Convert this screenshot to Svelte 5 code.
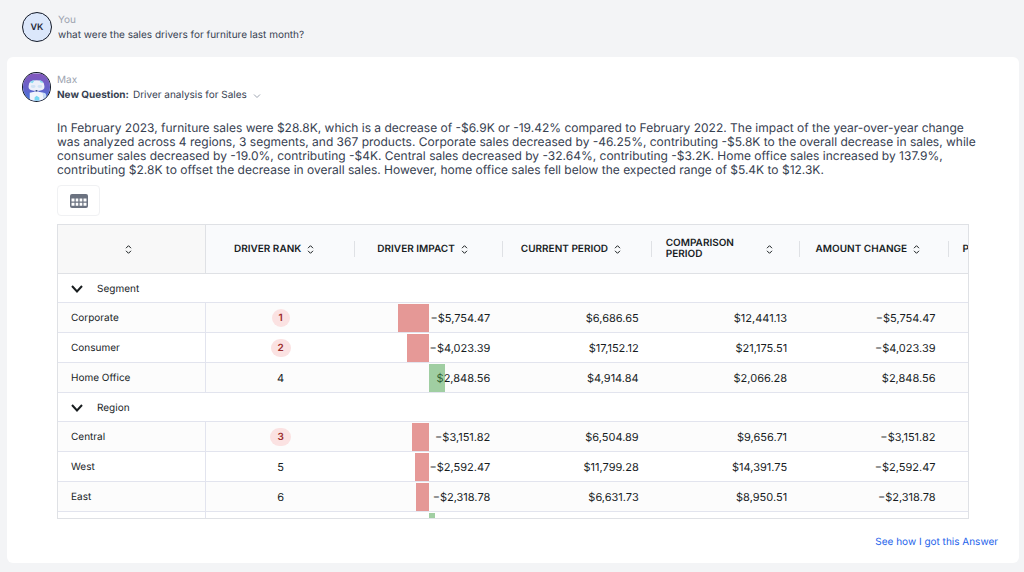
<script lang="ts">
  interface Driver {
    name: string;
    rank: number;
    impact: number;
    current: number;
    comparison: number;
  }

  interface Group {
    name: string;
    drivers: Driver[];
  }

  const columns = [
    '',
    'Driver rank',
    'Driver impact',
    'Current period',
    'Comparison period',
    'Amount change',
    'Percent',
  ];

  const groups: Group[] = [
    {
      name: 'Segment',
      drivers: [
        { name: 'Corporate', rank: 1, impact: -5754.47, current: 6686.65, comparison: 12441.13 },
        { name: 'Consumer', rank: 2, impact: -4023.39, current: 17152.12, comparison: 21175.51 },
        { name: 'Home Office', rank: 4, impact: 2848.56, current: 4914.84, comparison: 2066.28 },
      ],
    },
    {
      name: 'Region',
      drivers: [
        { name: 'Central', rank: 3, impact: -3151.82, current: 6504.89, comparison: 9656.71 },
        { name: 'West', rank: 5, impact: -2592.47, current: 11799.28, comparison: 14391.75 },
        { name: 'East', rank: 6, impact: -2318.78, current: 6631.73, comparison: 8950.51 },
        { name: 'South', rank: 7, impact: 1127.4, current: 3848.2, comparison: 2720.8 },
      ],
    },
  ];

  let open = $state<Record<string, boolean>>({ Segment: true, Region: true });

  function money(value: number) {
    const text = Math.abs(value).toLocaleString('en-US', {
      minimumFractionDigits: 2,
      maximumFractionDigits: 2,
    });
    return `${value < 0 ? '−' : ''}$${text}`;
  }

  // bar width in percent of the cell
  function barWidth(value: number) {
    return (Math.abs(value) / 27100) * 100;
  }
</script>

<main class="chat">
  <section class="message question">
    <div class="avatar">VK</div>
    <div class="message-body">
      <div class="author">You</div>
      <div class="line">what were the sales drivers for furniture last month?</div>
    </div>
  </section>

  <section class="card">
    <div class="message">
      <div class="avatar avatar-bot">
        <svg viewBox="0 0 28 28" aria-hidden="true">
          <defs>
            <linearGradient id="sky" x1="0" y1="0" x2="0" y2="1">
              <stop offset="0" stop-color="#8457bd" />
              <stop offset="0.6" stop-color="#6264cb" />
              <stop offset="1" stop-color="#3f73dc" />
            </linearGradient>
          </defs>
          <rect width="28" height="28" fill="url(#sky)" />
          <path d="M6 12q0-5 8-5t8 5q1 4-2 5-6 2-12 0-3-1-2-5z" fill="#edf0fa" />
          <path d="M7 9q2-2 5-2l-2 3zM17 7q3 0 4 3l-3-1z" fill="#8bdcf2" />
          <ellipse cx="10.500" cy="13.500" rx="2.500" ry="1.500" fill="#d0e2f5" />
          <ellipse cx="17.500" cy="13.500" rx="2.500" ry="1.500" fill="#d0e2f5" />
          <path d="M11 17h6l-1 2h-4z" fill="#cbd2ee" />
          <circle cx="14" cy="18" r="1" fill="#283c70" />
          <path d="M7 20q7-2 14 0l1 8H7z" fill="#f2f5fc" />
          <path d="M20 20q5-1 4 5l-2 2z" fill="#c8dcf5" />
          <path d="M12 25l2-2 3 2v3h-5z" fill="#79d9f2" />
        </svg>
      </div>
      <div class="message-body">
        <div class="author">Max</div>
        <div class="line">
          <strong>New Question:</strong> Driver analysis for Sales
          <button class="icon-button" aria-label="Show details">
            <svg width="8" height="6" viewBox="0 0 8 6"><path d="M1 1.500l3 3 3-3" /></svg>
          </button>
        </div>
      </div>
    </div>

    <div class="answer">
      <p class="summary">
        In February 2023, furniture sales were $28.8K, which is a decrease of -$6.9K or -19.42%
        compared to February 2022. The impact of the year-over-year change was analyzed across 4
        regions, 3 segments, and 367 products. Corporate sales decreased by -46.25%, contributing
        -$5.8K to the overall decrease in sales, while consumer sales decreased by -19.0%,
        contributing -$4K. Central sales decreased by -32.64%, contributing -$3.2K. Home office
        sales increased by 137.9%, contributing $2.8K to offset the decrease in overall sales.
        However, home office sales fell below the expected range of $5.4K to $12.3K.
      </p>

      <button class="view-button" aria-label="Table view">
        <svg width="18" height="14" viewBox="0 0 18 14">
          <rect width="18" height="14" rx="2" fill="#6b7280" />
          <g fill="#fff">
            <path d="M1.500 4.500h3v3h-3zM5.700 4.500h2.600v3H5.700zM9.600 4.500h2.700v3H9.600zM13.500 4.500h3v3h-3z" />
            <path d="M1.500 8.800h3v3h-3zM5.700 8.800h2.600v3H5.700zM9.600 8.800h2.700v3H9.600zM13.500 8.800h3v3h-3z" />
          </g>
        </svg>
      </button>

      <div class="grid">
        <table>
          <thead>
            <tr>
              {#each columns as column}
                <th scope="col">
                  <button class="sort" aria-label={`Sort by ${column || 'name'}`}>
                    <span>{column}</span>
                    <svg width="7" height="9" viewBox="0 0 7 9">
                      <path d="M1 3.200l2.500-2.500 2.500 2.500M1 5.800l2.500 2.500 2.500-2.500" />
                    </svg>
                  </button>
                </th>
              {/each}
            </tr>
          </thead>
          <tbody>
            {#each groups as group}
              <tr class="group">
                <td colspan={columns.length}>
                  <button class="toggle" onclick={() => (open[group.name] = !open[group.name])}>
                    <svg width="12" height="8" viewBox="0 0 12 8"><path d="M1 1l5 5.500 5-5.500" /></svg>
                    {group.name}
                  </button>
                </td>
              </tr>
              {#if open[group.name]}
                {#each group.drivers as driver, i}
                  <tr class:striped={i % 2 === 0}>
                    <th scope="row">{driver.name}</th>
                    <td class="rank">
                      <span class:top={driver.rank <= 3}>{driver.rank}</span>
                    </td>
                    <td>
                      {money(driver.impact)}
                      <span
                        class="bar"
                        class:negative={driver.impact < 0}
                        style:width="{barWidth(driver.impact)}%"
                      ></span>
                    </td>
                    <td>{money(driver.current)}</td>
                    <td>{money(driver.comparison)}</td>
                    <td>{money(driver.impact)}</td>
                    <td></td>
                  </tr>
                {/each}
              {/if}
            {/each}
          </tbody>
        </table>
      </div>
    </div>

    <div class="footer">
      <a href="#answer">See how I got this Answer</a>
    </div>
  </section>
</main>

<style>
  :global(body) {
    background: #f3f4f6;
    font-family: Inter, 'Liberation Sans', sans-serif;
    color: #374151;
    text-rendering: geometricPrecision;
  }
  button {
    border: 0;
    padding: 0;
    background: none;
    font: inherit;
    color: inherit;
    cursor: pointer;
    text-rendering: inherit;
  }
  svg {
    display: block;
    fill: none;
  }
  .chat {
    padding: 12px 5px 9px 7px;
  }
  .message {
    display: flex;
    gap: 6px;
    padding-left: 15px;
  }
  .message-body {
    padding-top: 1px;
  }
  .question {
    margin-bottom: 14px;
  }
  .avatar {
    display: flex;
    align-items: center;
    justify-content: center;
    box-sizing: border-box;
    width: 30px;
    height: 30px;
    border: 1px solid #111827;
    border-radius: 50%;
    background: #dbe7fb;
    color: #1f2937;
    font-size: 9px;
    font-weight: 600;
    overflow: hidden;
  }
  .avatar-bot {
    width: 29px;
  }
  .avatar-bot svg {
    width: 100%;
    height: 100%;
  }
  .author,
  .line {
    font-size: 10px;
    line-height: 15px;
  }
  .author {
    color: #9ca3af;
  }
  .line {
    display: flex;
    gap: 4px;
    align-items: center;
  }
  .line strong {
    font-weight: 700;
  }
  .icon-button {
    margin-left: 2px;
    stroke: #9ca3af;
  }
  .card {
    background: #fff;
    border-radius: 6px;
    padding: 15px 0 14px;
  }
  .answer {
    padding: 18px 50px 0;
  }
  .summary {
    margin: 0 -15px 8px 0;
    font-size: 12px;
    line-height: 14px;
  }
  .view-button {
    display: flex;
    align-items: center;
    justify-content: center;
    box-sizing: border-box;
    width: 43px;
    height: 31px;
    border: 1px solid #f0f1f3;
    border-radius: 4px;
  }
  .grid {
    box-sizing: border-box;
    height: 295px;
    margin-top: 8px;
    border: 1px solid #dfe1e5;
    overflow: hidden;
    color: #181d1f;
  }
  table {
    width: 1039px;
    table-layout: fixed;
    border-collapse: separate;
    border-spacing: 0;
    font-size: 11px;
  }
  thead th {
    box-sizing: border-box;
    height: 49px;
    padding: 0;
    border-bottom: 1px solid #dfe1e5;
    background: #f9fafc;
  }
  thead th:first-child {
    background: #f8f8f8;
    border-right: 1px solid #dfe1e5;
  }
  .sort {
    display: flex;
    align-items: center;
    justify-content: center;
    gap: 6px;
    box-sizing: border-box;
    width: 100%;
    height: 16px;
    padding: 0 26px 0 14px;
    border-right: 1px solid #dfe1e5;
    font-size: 10px;
    font-weight: 600;
    line-height: 11px;
    text-align: left;
    text-transform: uppercase;
  }
  th:first-child .sort {
    border-right: 0;
  }
  th:last-child .sort {
    justify-content: flex-start;
  }
  .sort svg {
    flex-shrink: 0;
    stroke: #181d1f;
  }
  tbody td,
  tbody th {
    position: relative;
    box-sizing: border-box;
    height: 30px;
    padding: 1px 13px 0;
    border-bottom: 1px solid #e2e4ee;
    font-weight: 400;
    text-align: right;
  }
  tbody th {
    border-right: 1px solid #e2e4ee;
    font-size: 10px;
    text-align: left;
  }
  .group td {
    height: 29px;
    font-size: 10px;
    text-align: left;
  }
  .striped {
    background: #fcfcfc;
  }
  .toggle {
    display: flex;
    align-items: center;
    gap: 14px;
  }
  .toggle svg {
    stroke: #181d1f;
    stroke-width: 2;
  }
  tbody .rank {
    text-align: center;
  }
  .rank .top {
    display: inline-block;
    padding: 0 7px;
    border-radius: 9px;
    background: #fbe2e2;
    color: #9b2c2c;
    font-size: 10px;
    font-weight: 600;
    line-height: 18px;
  }
  .bar {
    position: absolute;
    top: 1px;
    bottom: 0;
    left: 50%;
    background: rgba(67, 160, 71, 0.5);
  }
  .bar.negative {
    right: 50%;
    left: auto;
    background: rgba(206, 52, 47, 0.5);
  }
  .footer {
    display: flex;
    justify-content: flex-end;
    padding: 16px 21px 0 0;
  }
  .footer a {
    color: #2563eb;
    font-size: 10px;
    line-height: 14px;
    text-decoration: none;
  }
</style>
